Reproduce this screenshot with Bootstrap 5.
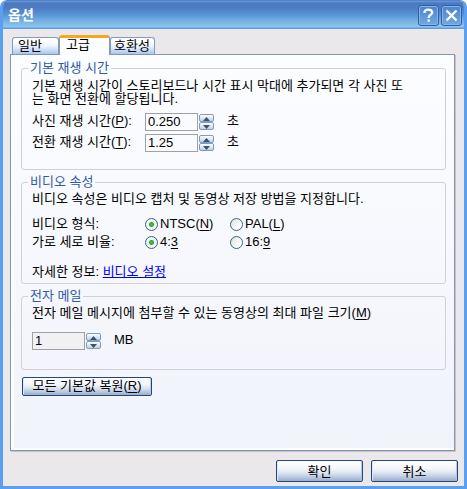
<!DOCTYPE html>
<html lang="ko">
<head>
<meta charset="utf-8">
<meta name="viewport" content="width=device-width, initial-scale=1">
<title>옵션</title>
<link href="https://cdn.jsdelivr.net/npm/bootstrap@5.3.0/dist/css/bootstrap.min.css" rel="stylesheet">
<style>
body{font-family:"Liberation Sans","Noto Sans CJK KR",sans-serif;font-size:13px;line-height:14px;color:#000;background:#fff}
.dialog{background:#ebe8ec;border:solid #5b9ff0;border-width:0 3px 3px;border-radius:7px 7px 0 0}
.frame{min-height:100vh;overflow:hidden}
.titlebar{height:29px;margin:0 -3px;padding:1px 5px 0 8px;background:linear-gradient(#3e68b4 0,#6b9ddd 1px,#4c78bf 3px,#4f7fc6 9px,#5a95d4 15px,#74b1e3 21px,#8fc5ea 27px,#5e9ce6 28px);border-radius:7px 7px 0 0}
.titlebar h1{font-size:14px;line-height:20px;font-weight:700;color:#fff}
.cap{width:21px;height:21px;border:1px solid #2f5fac;border-radius:3px;background:linear-gradient(#4d82cb,#70a9e3);box-shadow:inset 0 0 0 1px #84b5e8}
.cap-gap{gap:2px}
.tabs{padding:6px 0 0 9px}
.tab{height:17px;border:1px solid #849ab8;border-bottom:0;border-radius:3px 3px 0 0;background:linear-gradient(#fff 20%,#eef4fd 50%,#a9c6f0);line-height:16px;color:#000;text-align:left}
.tab.on{height:20px;border-top:3px solid #f2a922;background:#fcfdff;margin-bottom:-1px;line-height:12px;z-index:1}
.w-a{width:47px;padding:0 5px}.w-b{width:51px;padding:0 6px 3px}.w-c{width:45px;padding:0 3px}
.panel{margin:0 9px 0 7px;padding:6px 8px 0 10px;border:1px solid #8098b8;background:linear-gradient(#fcfdff,#f1f3fb);box-shadow:inset 3px -2px #fcfdff,1px 1px #c3c3cb}
.group{border:1px solid #d0d1d5;border-radius:3px;padding:0 9px 0 10px;margin-bottom:5px}
.group legend{float:none;width:auto;font-size:13px;line-height:14px;margin:0 0 0 -4px;padding:0 2px;color:#2f5aa8}
.tall{min-height:109px}.short{min-height:81px}
.note{line-height:12px;margin-top:4px}
.para{line-height:13px;margin-bottom:8px}
.field{margin-bottom:3px}
.size-field{margin-top:13px}
.caption-col{width:113px}
.field label{padding-top:1px}
.num{width:53px;height:18px;border:1px solid #a0a0a6;outline:0;background:transparent;padding:0 2px 2px;font-size:13px;line-height:14px;color:#000}
.num.off{background:#f1f1f4}
.spin{width:15px;height:16px;margin:1px 0 0 1px}
.spin button{display:block;width:15px;height:8px;padding:0;border:1px solid #7d9dbf;border-radius:2px;background:linear-gradient(#fff,#b9d0ea)}
.spin svg{display:block;margin:1px auto 0}
.unit{margin-left:13px;padding-top:1px}
.opt{width:85px}
.opt input{appearance:none;width:13px;height:13px;margin:0 2px 0 0;border:1px solid #33648f;border-radius:50%;background:linear-gradient(135deg,#dddcd5,#fff 70%);flex:none}
.opt input:checked{background:radial-gradient(circle,#4cc84c 0,#2ba52b 2px,#f4f4f0 3px)}
.xp{border:1px solid #21477f;border-radius:2px;background:linear-gradient(#fff,#f2f6fb 40%,#d4deed 65%,#9aaecb);box-shadow:inset 1px 0 #dde7f5,inset -1px 0 #b8c9e0;color:#000;padding:0;text-align:center}
.restore{width:130px;height:19px;margin:2px 0 54px 1px;line-height:14px;padding-bottom:2px}
.wide{width:87px;height:22px;line-height:19px}
.actions{gap:8px;padding:9px 6px 4px}
.more a{color:#00f}
u{text-underline-offset:2px}
</style>
<script src="https://cdn.jsdelivr.net/npm/bootstrap@5.3.0/dist/js/bootstrap.bundle.min.js"></script>
</head>
<body>
<main class="dialog frame d-flex flex-column">
  <header class="titlebar d-flex align-items-center">
    <h1 class="m-0 me-auto">옵션</h1>
    <div class="d-flex cap-gap">
      <button class="cap p-0" type="button" aria-label="도움말"><svg class="d-block m-auto" width="17" height="17" viewBox="0 0 17 17" fill="none" stroke="#fff" stroke-width="2.2"><path d="M4.500 6V4.500Q5.500 2.700 8.500 2.700T12.300 5.200Q12.300 6.800 10.400 8T8.700 11"/><path d="M8.700 12.500v2.300"/></svg></button>
      <button class="cap p-0" type="button" aria-label="닫기"><svg class="d-block m-auto" width="17" height="17" viewBox="0 0 17 17" stroke="#fff" stroke-width="2.4"><path d="M3.500 3.500l10 10M13.500 3.500l-10 10"/></svg></button>
    </div>
  </header>
  <div class="tabs d-flex align-items-end" role="tablist">
    <button class="tab w-a" type="button" role="tab">일반</button>
    <button class="tab on w-b position-relative" type="button" role="tab" aria-selected="true">고급</button>
    <button class="tab w-c" type="button" role="tab">호환성</button>
  </div>
  <form class="panel flex-grow-1" id="options">
    <fieldset class="group tall">
      <legend>기본 재생 시간</legend>
      <p class="note para">기본 재생 시간이 스토리보드나 시간 표시 막대에 추가되면 각 사진 또<br>는 화면 전환에 할당됩니다.</p>
      <div class="field d-flex">
        <label class="caption-col" for="photo">사진 재생 시간(<u>P</u>):</label>
        <input class="num" id="photo" type="text" value="0.250">
        <div class="spin"><button type="button" aria-label="늘리기"><svg width="9" height="4"><path d="M1 4L4.500 0L8 4z" fill="#3f526b"/></svg></button><button type="button" aria-label="줄이기"><svg width="9" height="4"><path d="M1 0h7L4.500 4z" fill="#3f526b"/></svg></button></div>
        <span class="unit">초</span>
      </div>
      <div class="field d-flex">
        <label class="caption-col" for="trans">전환 재생 시간(<u>T</u>):</label>
        <input class="num" id="trans" type="text" value="1.25">
        <div class="spin"><button type="button" aria-label="늘리기"><svg width="9" height="4"><path d="M1 4L4.500 0L8 4z" fill="#3f526b"/></svg></button><button type="button" aria-label="줄이기"><svg width="9" height="4"><path d="M1 0h7L4.500 4z" fill="#3f526b"/></svg></button></div>
        <span class="unit">초</span>
      </div>
    </fieldset>
    <fieldset class="group tall">
      <legend>비디오 속성</legend>
      <p class="note mb-2 pb-1">비디오 속성은 비디오 캡처 및 동영상 저장 방법을 지정합니다.</p>
      <div class="d-flex align-items-center mb-1" role="radiogroup" aria-labelledby="fmt">
        <span class="caption-col" id="fmt">비디오 형식:</span>
        <label class="opt d-flex align-items-center"><input type="radio" name="format" checked><span>NTSC(<u>N</u>)</span></label>
        <label class="opt d-flex align-items-center"><input type="radio" name="format"><span>PAL(<u>L</u>)</span></label>
      </div>
      <div class="d-flex align-items-center" role="radiogroup" aria-labelledby="ratio">
        <span class="caption-col" id="ratio">가로 세로 비율:</span>
        <label class="opt d-flex align-items-center"><input type="radio" name="aspect" checked><span>4:<u>3</u></span></label>
        <label class="opt d-flex align-items-center"><input type="radio" name="aspect"><span>16:<u>9</u></span></label>
      </div>
      <p class="more mt-3 mb-0">자세한 정보: <a href="#video">비디오 설정</a></p>
    </fieldset>
    <fieldset class="group short">
      <legend>전자 메일</legend>
      <label class="note d-block" for="size">전자 메일 메시지에 첨부할 수 있는 동영상의 최대 파일 크기(<u>M</u>)</label>
      <div class="size-field d-flex">
        <input class="num off" id="size" type="text" value="1">
        <div class="spin"><button type="button" aria-label="늘리기"><svg width="9" height="4"><path d="M1 4L4.500 0L8 4z" fill="#3f526b"/></svg></button><button type="button" aria-label="줄이기"><svg width="9" height="4"><path d="M1 0h7L4.500 4z" fill="#3f526b"/></svg></button></div>
        <span class="unit">MB</span>
      </div>
    </fieldset>
    <button class="xp restore" type="button">모든 기본값 복원(<u>R</u>)</button>
  </form>
  <footer class="actions d-flex justify-content-end">
    <button class="xp wide" type="submit" form="options">확인</button>
    <button class="xp wide" type="button">취소</button>
  </footer>
</main>
</body>
</html>
